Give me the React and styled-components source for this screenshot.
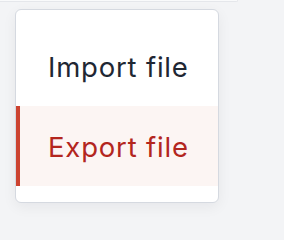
import React, { useState } from "react";
import styled, { createGlobalStyle } from "styled-components";

const GlobalStyle = createGlobalStyle`
  html, body {
    margin: 0;
    padding: 0;
    background: #f3f4f6;
    font-family: Inter, "Noto Sans", sans-serif;
  }
`;

const items = [
  { id: "import", label: "Import file" },
  { id: "export", label: "Export file" },
];

const Page = () => {
  const [active, setActive] = useState("export");

  return (
    <Container>
      <GlobalStyle />
      <TopEdge />
      <Menu>
        {items.map((item) => (
          <Item
            key={item.id}
            $active={item.id === active}
            onClick={() => setActive(item.id)}
          >
            {item.label}
          </Item>
        ))}
      </Menu>
    </Container>
  );
};

export default Page;

const Container = styled.div`
  width: 284px;
  height: 240px;
  display: flex;
  flex-direction: column;
  background: #f3f4f6;
  overflow: hidden;
`;

const TopEdge = styled.div`
  width: 237px;
  height: 1px;
  background: #f9fafb;
  border-bottom: 1px solid #e5e7eb;
  border-right: 1px solid #e5e7eb;
  border-bottom-right-radius: 4px;
`;

const Menu = styled.div`
  margin: 7px 0 0 15px;
  width: 202px;
  padding: 16px 0;
  display: flex;
  flex-direction: column;
  background: #ffffff;
  border: 1px solid #d5d9e0;
  border-radius: 6px;
  box-shadow: 0 4px 14px rgba(15, 23, 42, 0.06);
  overflow: hidden;
`;

const Item = styled.div`
  box-sizing: border-box;
  height: 80px;
  display: flex;
  align-items: center;
  padding-left: ${(p) => (p.$active ? "28px" : "32px")};
  padding-top: 2px;
  border-left: ${(p) => (p.$active ? "4px solid #cc4330" : "none")};
  background: ${(p) => (p.$active ? "#fcf5f3" : "transparent")};
  color: ${(p) => (p.$active ? "#b3261e" : "#1f2733")};
  font-size: 27.5px;
  letter-spacing: 0.8px;
  cursor: pointer;
`;
